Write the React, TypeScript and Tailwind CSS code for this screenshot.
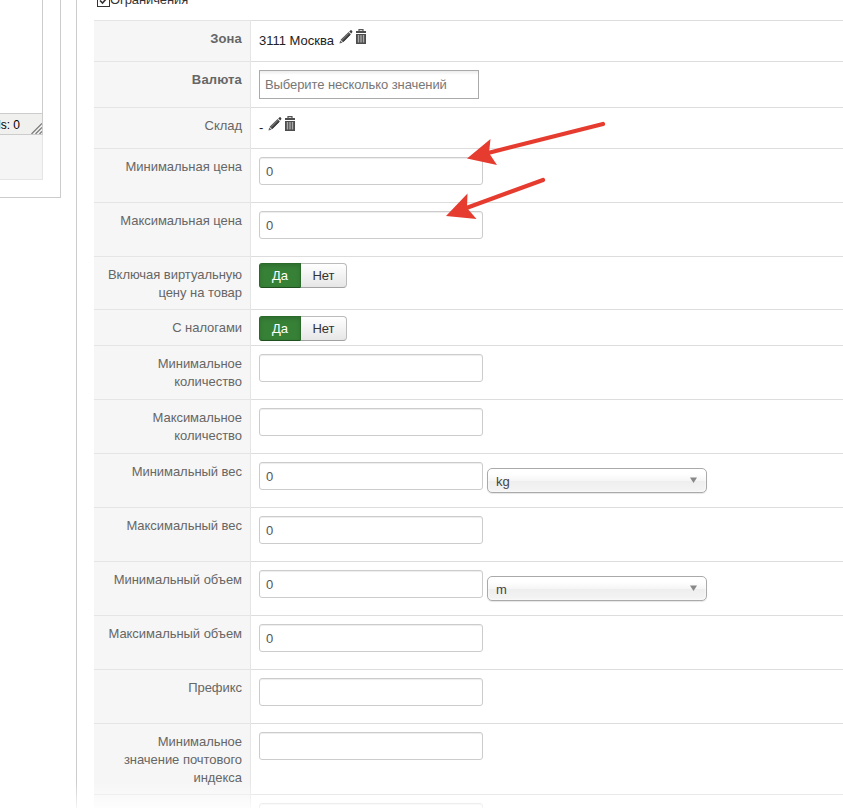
import React from 'react';

type Control = 'edit' | 'multi' | 'input' | 'toggle';

interface Row {
  label: string[];
  control: Control;
  height: string;
  bold?: boolean;
  value?: string;
  unit?: string;
}

const rows: Row[] = [
  { label: ['Зона'], control: 'edit', value: '3111 Москва', height: 'h-[41px]', bold: true },
  { label: ['Валюта'], control: 'multi', value: 'Выберите несколько значений', height: 'h-[46px]', bold: true },
  { label: ['Склад'], control: 'edit', value: '-', height: 'h-[41px]' },
  { label: ['Минимальная цена'], control: 'input', value: '0', height: 'h-[54px]' },
  { label: ['Максимальная цена'], control: 'input', value: '0', height: 'h-[54px]' },
  { label: ['Включая виртуальную', 'цену на товар'], control: 'toggle', height: 'h-[53px]' },
  { label: ['С налогами'], control: 'toggle', height: 'h-[36px]' },
  { label: ['Минимальное', 'количество'], control: 'input', height: 'h-[54px]' },
  { label: ['Максимальное', 'количество'], control: 'input', height: 'h-[54px]' },
  { label: ['Минимальный вес'], control: 'input', value: '0', unit: 'kg', height: 'h-[54px]' },
  { label: ['Максимальный вес'], control: 'input', value: '0', height: 'h-[54px]' },
  { label: ['Минимальный объем'], control: 'input', value: '0', unit: 'm', height: 'h-[54px]' },
  { label: ['Максимальный объем'], control: 'input', value: '0', height: 'h-[54px]' },
  { label: ['Префикс'], control: 'input', height: 'h-[54px]' },
  { label: ['Минимальное', 'значение почтового', 'индекса'], control: 'input', height: 'h-[71px]' },
  { label: ['Максимальное'], control: 'input', height: 'h-[71px]' },
];

function PencilIcon() {
  return (
    <svg width="14" height="15" viewBox="0 0 14 15" className="shrink-0">
      <path d="M0.4 14.6 L1.3 11.4 L3.6 13.7 Z" fill="#666" />
      <path d="M1.6 10.8 L9.6 3 L11.8 5.2 L4 13.2 Z" fill="#555" />
      <path d="M3.2 10.7 L9.6 4.4" stroke="#7d7d7d" strokeWidth="0.8" />
      <path d="M4.2 12.4 L11.2 5.4" stroke="#333" strokeWidth="1.1" />
      <path d="M10.2 2.4 L11.3 1.4 Q12 0.8 12.7 1.4 L13.2 2 Q13.7 2.7 13.1 3.4 L12.3 4.5 Z" fill="#3d3d3d" />
    </svg>
  );
}

function TrashIcon() {
  return (
    <svg width="10" height="15" viewBox="0 0 10 15" className="shrink-0">
      <path d="M3 2.5 V0.6 H7 V2.5" fill="none" stroke="#555" strokeWidth="1.2" />
      <rect x="0" y="2" width="10" height="2" fill="#4d4d4d" />
      <rect x="0" y="5" width="10" height="10" fill="#4d4d4d" />
      <path d="M2.5 6 V13.5 M5 6 V13.5 M7.5 6 V13.5" stroke="#aaa" strokeWidth="1.4" />
    </svg>
  );
}

function EditLink({ value }: { value?: string }) {
  return (
    <div className="flex pt-[8px]">
      <span className="pt-[3px] leading-[18px] text-[#222]">{value}</span>
      <span className="ml-[5px] flex gap-[3px]">
        <PencilIcon />
        <TrashIcon />
      </span>
    </div>
  );
}

function MultiSelect({ value }: { value?: string }) {
  return (
    <div className="mt-[8px] h-[29px] w-[220px] border border-[#aaa] bg-linear-to-b from-[#eee] from-1% to-white to-15% pl-[5px] leading-[28px] tracking-[-0.09px] text-[#777]">
      {value}
    </div>
  );
}

function Toggle() {
  return (
    <div className="mt-[6px] flex h-[25px] w-[88px] leading-[23px]">
      <span className="w-[42px] rounded-l-[3px] border border-[#2b6a2b] border-b-[#1f4f1f] bg-[#378137] text-center text-white shadow-[inset_0_2px_4px_rgba(0,0,0,0.15)]">
        Да
      </span>
      <span className="w-[46px] rounded-r-[4px] border border-l-0 border-[#bbb] border-b-[#a2a2a2] bg-linear-to-b from-white to-[#e6e6e6] text-center text-[#333]">
        Нет
      </span>
    </div>
  );
}

function UnitSelect({ unit }: { unit: string }) {
  return (
    <div className="mt-[14px] flex h-[25px] w-[220px] items-center justify-between rounded-[5px] border border-[#aaa] bg-[linear-gradient(#fff_20%,#f6f6f6_50%,#eee_52%,#f4f4f4_100%)] pl-[8px] pr-[8px] text-[#444] shadow-[0_0_3px_#fff_inset,0_1px_1px_rgba(0,0,0,0.1)]">
      <span className="pt-[2px]">{unit}</span>
      <svg width="9" height="6" viewBox="0 0 9 6" className="mb-px">
        <path d="M1 0.5 H8 L4.5 6 Z" fill="#888" />
      </svg>
    </div>
  );
}

function Field({ row }: { row: Row }) {
  if (row.control === 'edit') return <EditLink value={row.value} />;
  if (row.control === 'multi') return <MultiSelect value={row.value} />;
  if (row.control === 'toggle') return <Toggle />;
  return (
    <div className="flex items-start gap-[4px]">
      <div className="mt-[8px] h-[28px] w-[224px] rounded-[3px] border border-[#ccc] bg-white pl-[6px] leading-[27px] text-[#555] shadow-[inset_0_1px_1px_rgba(0,0,0,0.075)]">
        {row.value}
      </div>
      {row.unit && <UnitSelect unit={row.unit} />}
    </div>
  );
}

function EditorPanel() {
  return (
    <div className="h-[198px] w-[61px] shrink-0 border-b border-r border-[#ccc]">
      <div className="flex h-[180px] w-[43px] flex-col border-b border-r border-[#e5e5e5] bg-[#f5f5f5]">
        <div className="-mr-px h-[113px] border-r border-[#ccc] bg-white" />
        <div className="-mr-px flex h-[22px] justify-between border-y border-r border-y-[#ccc] border-r-[#ccc] bg-[#f0f0ee]">
          <span className="-ml-[6px] w-[26px] whitespace-nowrap text-right text-[12px] leading-[22px] text-black">ds: 0</span>
          <svg width="11" height="11" viewBox="0 0 11 11" className="mt-[9px]">
            <path d="M0.5 11 L11 0.5 M4.5 11 L11 4.5 M8.5 11 L11 8.5" stroke="#777" strokeWidth="1.2" />
          </svg>
        </div>
      </div>
    </div>
  );
}

export default function App() {
  return (
    <div className="relative flex h-[808px] w-[843px] overflow-hidden bg-white font-['Liberation_Sans',Arial,sans-serif] text-[13px] text-[#333]">
      <EditorPanel />
      <div className="ml-[15px] min-w-0 flex-1 border-l border-[#ccc] pl-[17px]">
        <div className="flex h-[20px] pl-[3px]">
          <svg width="13" height="13" viewBox="0 0 13 13" className="-mt-[6px] shrink-0">
            <rect x="0.5" y="0.5" width="12" height="12" fill="#fff" stroke="#333" />
            <path d="M3 6.5 L5.5 9 L10 4" fill="none" stroke="#333" strokeWidth="1.6" />
          </svg>
          <span className="-mt-[9px] leading-[18px] tracking-[-0.1px]">Ограничения</span>
        </div>
        <div>
          {rows.map((row, i) => (
            <div key={i} className={`flex ${row.height}`}>
              <div
                className={`w-[157px] shrink-0 whitespace-nowrap border-r border-t border-r-[#e5e5e5] border-t-[#e5e5e5] bg-[#f6f6f6] pr-[8px] pt-[9px] text-right leading-[18px] text-[#666] ${
                  row.bold ? 'font-bold tracking-[0.15px]' : 'tracking-[-0.04px]'
                }`}
              >
                {row.label.map((line) => (
                  <div key={line}>{line}</div>
                ))}
              </div>
              <div className="flex-1 border-t border-[#ddd] pl-[8px]">
                <Field row={row} />
              </div>
            </div>
          ))}
        </div>
      </div>

      {/* arrows pointing at the price fields */}
      <svg width="843" height="808" viewBox="0 0 843 808" className="pointer-events-none absolute left-0 top-0">
        <g fill="#e63c30" stroke="#e63c30">
          <path d="M603 124 L486 153.5" strokeWidth="4.2" strokeLinecap="round" />
          <path d="M467 158.5 L490.5 139 L489 153 L497 165 Z" stroke="none" />
          <path d="M543 180 L465 208.5" strokeWidth="4.2" strokeLinecap="round" />
          <path d="M446 216 L467.5 193.5 L467 208 L476.5 219 Z" stroke="none" />
        </g>
      </svg>
      {/* page fades out at the bottom edge */}
      <div className="pointer-events-none absolute bottom-0 left-0 h-[26px] w-full bg-linear-to-b from-white/0 to-white/80" />
    </div>
  );
}
